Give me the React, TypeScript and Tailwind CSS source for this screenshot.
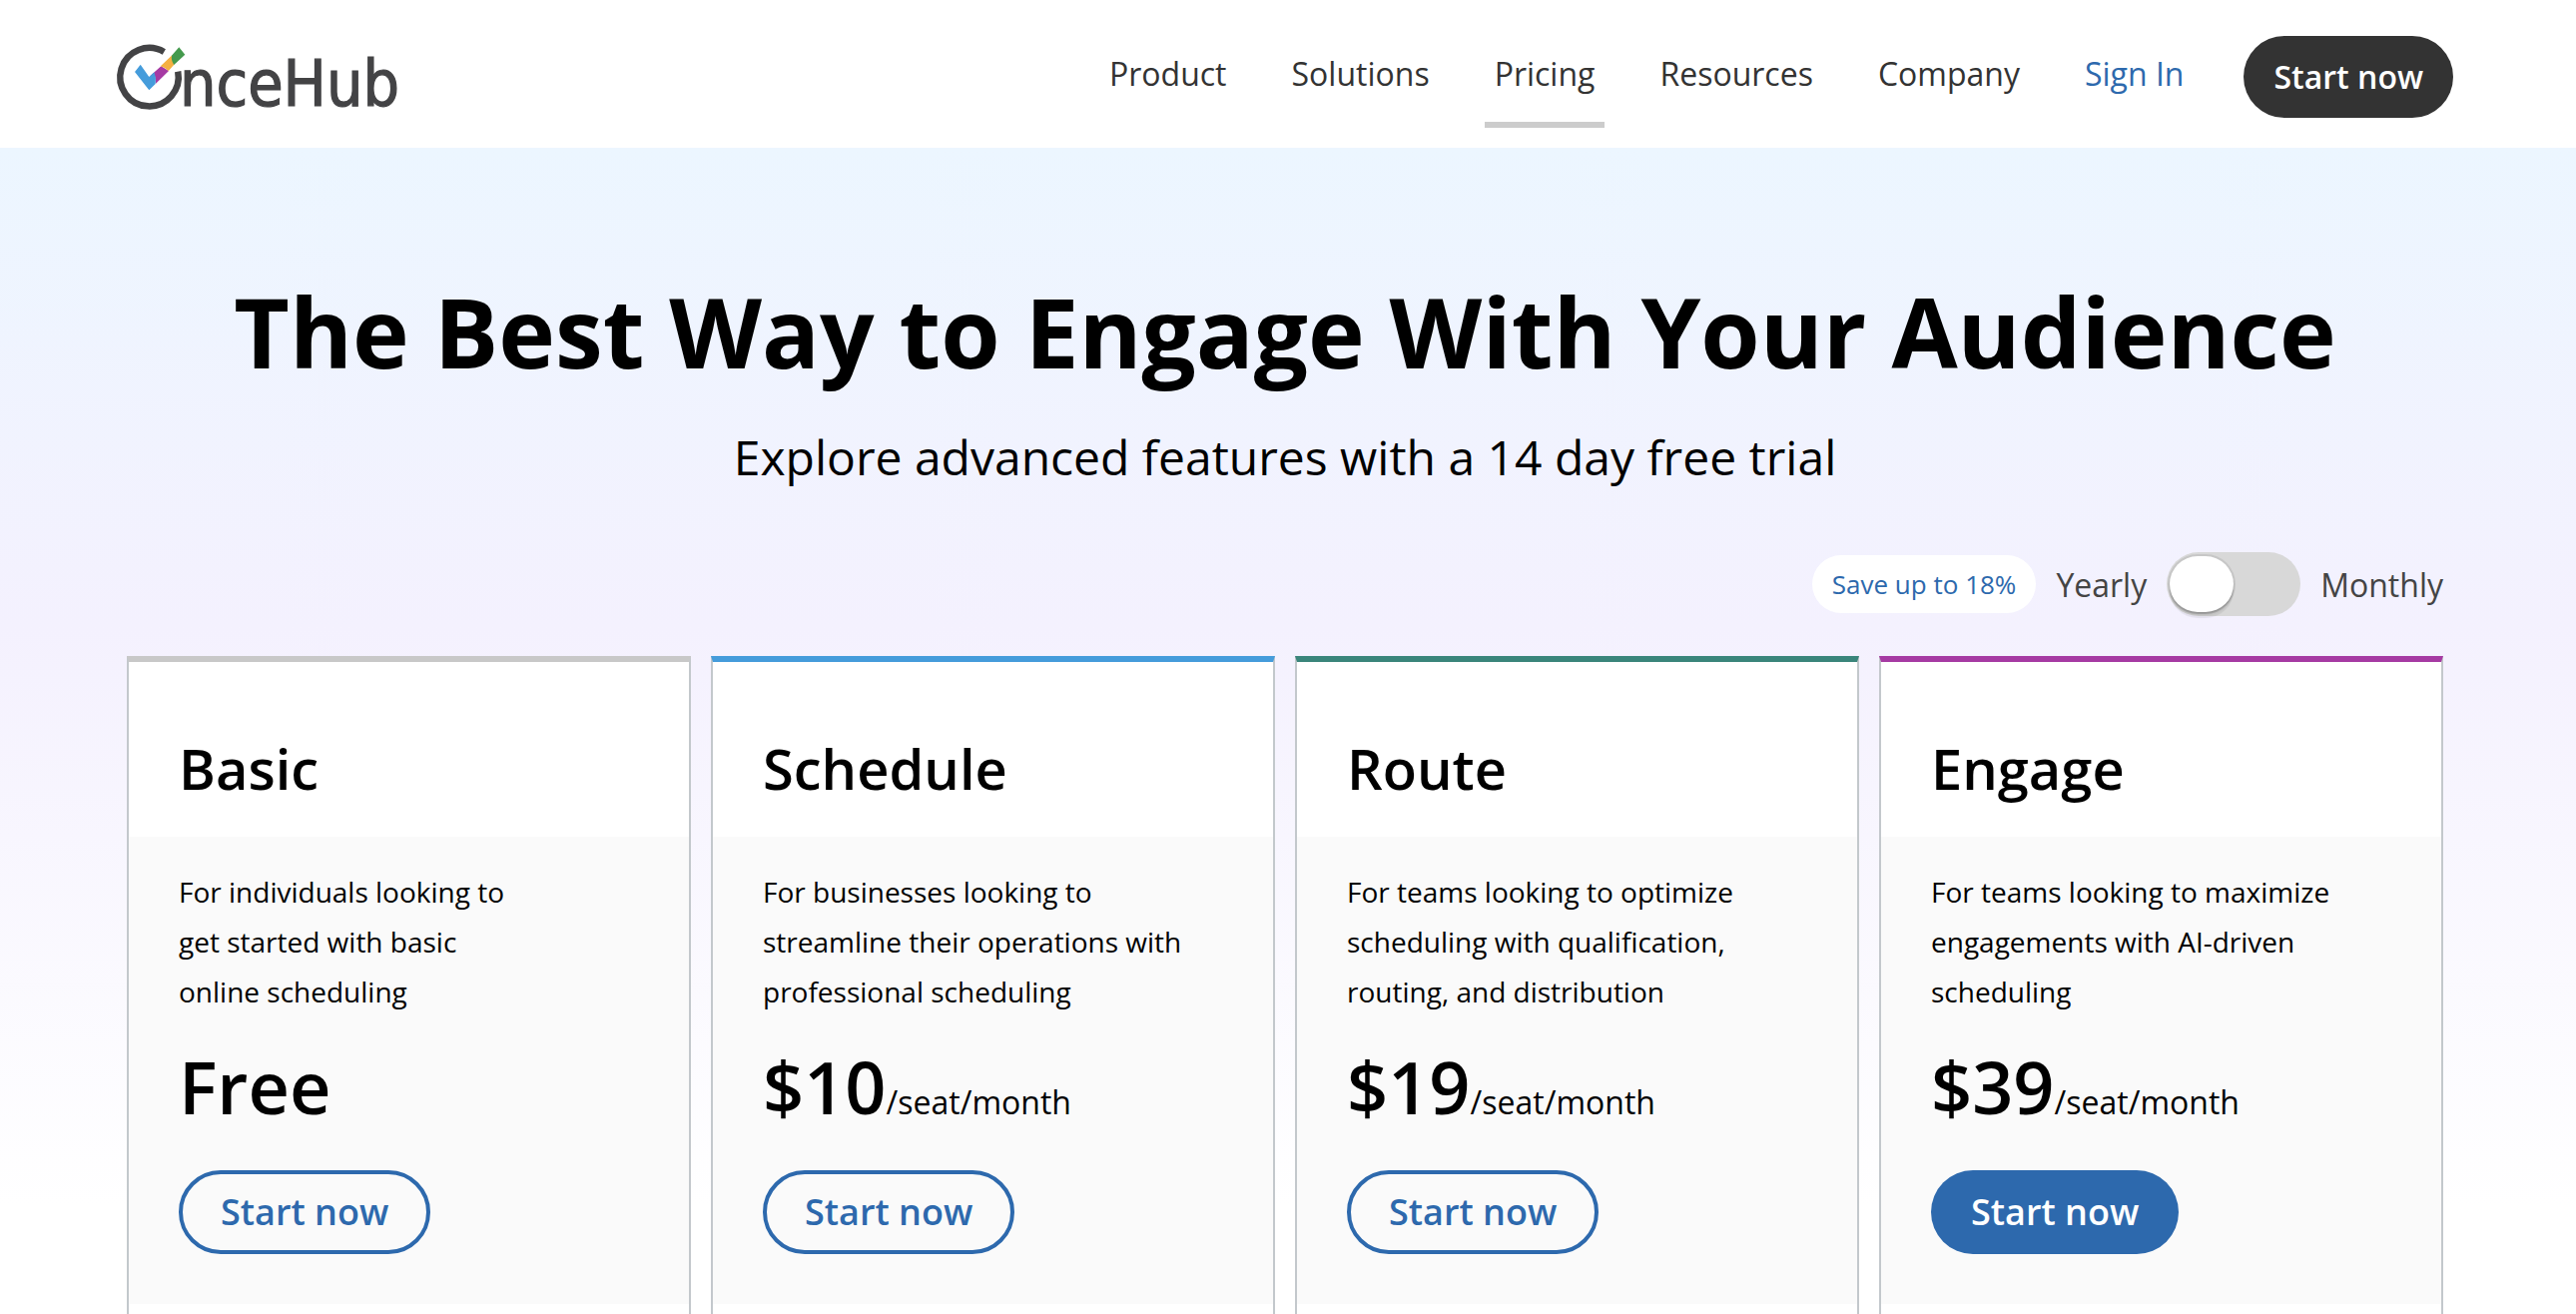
import { useState } from 'react';
import clsx from 'clsx';

const links = ['Product', 'Solutions', 'Pricing', 'Resources', 'Company'];

const plans = [
  {
    name: 'Basic',
    lines: ['For individuals looking to', 'get started with basic', 'online scheduling'],
    price: 'Free',
    border: 'border-t-[#c8c8c8]',
  },
  {
    name: 'Schedule',
    lines: ['For businesses looking to', 'streamline their operations with', 'professional scheduling'],
    price: '$10',
    unit: '/seat/month',
    border: 'border-t-[#459cdb]',
  },
  {
    name: 'Route',
    lines: ['For teams looking to optimize', 'scheduling with qualification,', 'routing, and distribution'],
    price: '$19',
    unit: '/seat/month',
    border: 'border-t-[#3a857b]',
  },
  {
    name: 'Engage',
    lines: ['For teams looking to maximize', 'engagements with AI-driven', 'scheduling'],
    price: '$39',
    unit: '/seat/month',
    border: 'border-t-[#a63aa3]',
    featured: true,
  },
];

function Logo() {
  return (
    <svg className="overflow-visible" width="290" height="90" viewBox="0 0 290 90" role="img" aria-label="OnceHub">
      <path d="M47.3 14A29.200 29.200 0 1 0 61.200 33.700" fill="none" stroke="#434345" strokeWidth="6.500" />
      <path d="M32.300 39L44.300 28.300L52 33L39 45.700Q39.500 41 37.300 36Z" fill="#a63aa3" />
      <path d="M18 34L23.700 26.700L32.300 39L37.500 34.300Q39.800 40 38.700 46L32.300 52.300Z" fill="#459cdb" />
      <path d="M43.800 28.200L55.300 17.300L57.300 26.800L51.800 33Q48 29.500 43.800 28.200Z" fill="#f4b042" />
      <path d="M55.100 17.500L62.300 9.300L68.300 16.700L57.200 26.900Q54 22 55.100 17.500Z" fill="#449a4d" />
      <text
        x="63"
        y="68"
        fontFamily="DejaVu Sans Condensed, Open Sans, sans-serif"
        fontSize="64"
        fill="#434345"
        stroke="#434345"
        strokeWidth="1.200"
      >
        nceHub
      </text>
    </svg>
  );
}

export default function App() {
  const [monthly, setMonthly] = useState(false);

  return (
    <div className="min-h-screen bg-white font-['Open_Sans',sans-serif] text-black">
      <header className="h-[148px] bg-white pt-9 pr-1.5">
        <div className="max-w-[2340px] mx-auto flex items-start justify-between">
          <a href="#" className="pt-0.5">
            <Logo />
          </a>
          <nav className="flex items-start text-[32px] leading-[44px] text-[#333]">
            <div className="flex gap-[45px] pt-4">
              {links.map((link) => (
                <a
                  key={link}
                  href="#"
                  className={clsx('px-2.5 pb-[26px] border-b-6', link === 'Pricing' ? 'border-[#ccc]' : 'border-transparent')}
                >
                  {link}
                </a>
              ))}
              <a href="#" className="px-2.5 text-[#2d69ad]">Sign In</a>
            </div>
            <button className="ml-[50px] h-[82px] px-[30px] rounded-full bg-[#333] text-white font-semibold">
              Start now
            </button>
          </nav>
        </div>
      </header>

      <main className="bg-[linear-gradient(180deg,#ecf6ff_0px,#f4f1fe_480px,#ffffff_1060px)] pr-1.5">
        <div className="max-w-[2320px] mx-auto">
          <h1 className="pt-[119px] text-center text-[96px] leading-[130px] font-bold">
            The Best Way to Engage With Your Audience
          </h1>
          <p className="pt-[28px] text-center text-[48px] leading-[66px]">
            Explore advanced features with a 14 day free trial
          </p>

          <div className="mt-[62px] flex items-center justify-end text-[32px] leading-[44px] text-[#444]">
            <span className="mr-5 h-[58px] px-5 flex items-center rounded-full bg-white text-[26px] text-[#2d69ad]">
              Save up to 18%
            </span>
            <label htmlFor="billing" className="pt-0.5">Yearly</label>
            <span className="relative mx-5 flex h-16 w-[134px] items-center rounded-full bg-[#d8d8d8]">
              <input
                id="billing"
                type="checkbox"
                role="switch"
                aria-label="Monthly billing"
                checked={monthly}
                onChange={(e) => setMonthly(e.target.checked)}
                className="peer absolute inset-0 m-0 h-full w-full cursor-pointer appearance-none rounded-full"
              />
              <span className="pointer-events-none ml-[3px] h-14 w-16 rounded-full bg-white shadow-[0_0_0_2px_rgba(0,0,0,0.08),0_2px_2px_rgba(0,0,0,0.2),0_6px_1px_rgba(0,0,0,0.07)] peer-checked:ml-[67px]" />
            </span>
            <label htmlFor="billing" className="pt-0.5">Monthly</label>
          </div>

          <div className="pt-10 grid grid-cols-4 gap-5">
            {plans.map((plan) => (
              <section key={plan.name} className={clsx('border-2 border-b-0 border-t-6 border-[#c3c8cc] bg-white', plan.border)}>
                <h2 className="px-[50px] pt-[68px] pb-[31px] text-[56px] leading-[76px] font-semibold">{plan.name}</h2>
                <div className="bg-[#fafafa] px-[50px] pt-[30px] pb-[50px]">
                  <p className="text-[28px] leading-[50px]">
                    {plan.lines.map((line) => (
                      <span key={line} className="block">{line}</span>
                    ))}
                  </p>
                  <p className="pt-[21px] text-[72px] leading-[98px] font-semibold">
                    {plan.price}
                    {plan.unit && <span className="text-[32px] leading-none font-normal">{plan.unit}</span>}
                  </p>
                  <button
                    className={clsx(
                      'mt-[35px] block h-[84px] rounded-full text-[36px] font-semibold',
                      plan.featured ? 'px-10 bg-[#2d69ad] text-white' : 'px-[38px] border-4 border-[#2d69ad] text-[#2d69ad]',
                    )}
                  >
                    Start now
                  </button>
                </div>
                <div className="h-2.5" />
              </section>
            ))}
          </div>
        </div>
      </main>
    </div>
  );
}
